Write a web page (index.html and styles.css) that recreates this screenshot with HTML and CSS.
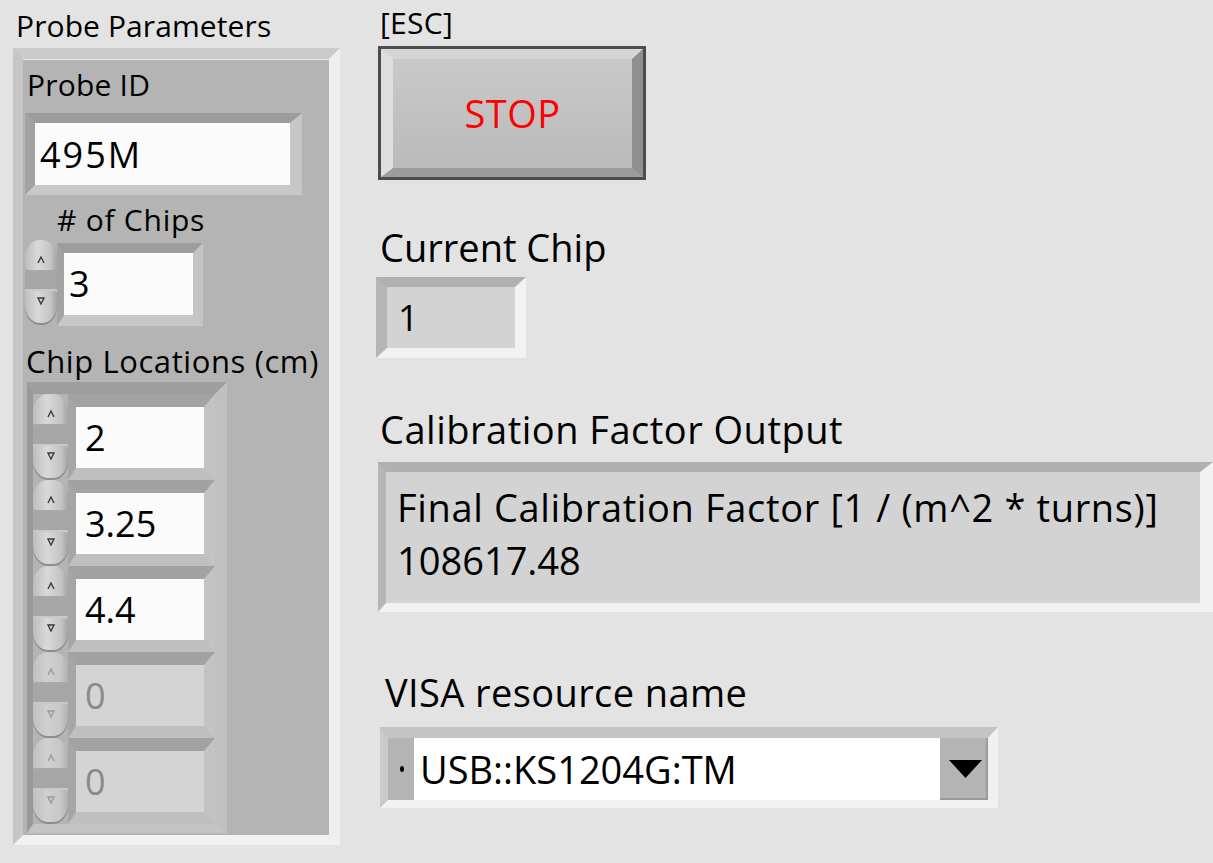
FILE: index.html
```html
<!DOCTYPE html>
<html>
<head>
<meta charset="utf-8">
<link rel="stylesheet" href="styles.css">
</head>
<body>
<div class="panel">
  <div class="left">
    <div class="lbl lbl-probe">Probe Parameters</div>
    <div class="cluster">
      <div class="clbl lbl-id">Probe ID</div>
      <div class="frame str-frame"><div class="field str-field">495M</div></div>
      <div class="clbl lbl-chips"># of Chips</div>
      <div class="numrow">
        <div class="incr incr-chips">
          <div class="up"><svg viewBox="0 0 12 12"><path d="M3 9 L6 3 L9 9"/></svg></div>
          <div class="mid"></div>
          <div class="dn"><svg viewBox="0 0 12 12"><path d="M3 3 L9 3 L6 9 Z"/></svg></div>
        </div>
        <div class="frame num-frame"><div class="field num-field">3</div></div>
      </div>
      <div class="clbl lbl-loc">Chip Locations (cm)</div>
      <div class="array">
        <div class="elem">
          <div class="incr"><div class="up"><svg viewBox="0 0 12 12"><path d="M3 9 L6 3 L9 9"/></svg></div><div class="mid"></div><div class="dn"><svg viewBox="0 0 12 12"><path d="M3 3 L9 3 L6 9 Z"/></svg></div></div>
          <div class="frame el-frame"><div class="field el-field">2</div></div>
        </div>
        <div class="elem">
          <div class="incr"><div class="up"><svg viewBox="0 0 12 12"><path d="M3 9 L6 3 L9 9"/></svg></div><div class="mid"></div><div class="dn"><svg viewBox="0 0 12 12"><path d="M3 3 L9 3 L6 9 Z"/></svg></div></div>
          <div class="frame el-frame"><div class="field el-field">3.25</div></div>
        </div>
        <div class="elem">
          <div class="incr"><div class="up"><svg viewBox="0 0 12 12"><path d="M3 9 L6 3 L9 9"/></svg></div><div class="mid"></div><div class="dn"><svg viewBox="0 0 12 12"><path d="M3 3 L9 3 L6 9 Z"/></svg></div></div>
          <div class="frame el-frame"><div class="field el-field">4.4</div></div>
        </div>
        <div class="elem disabled">
          <div class="incr"><div class="up"><svg viewBox="0 0 12 12"><path d="M3 9 L6 3 L9 9"/></svg></div><div class="mid"></div><div class="dn"><svg viewBox="0 0 12 12"><path d="M3 3 L9 3 L6 9 Z"/></svg></div></div>
          <div class="frame el-frame"><div class="field el-field">0</div></div>
        </div>
        <div class="elem disabled">
          <div class="incr"><div class="up"><svg viewBox="0 0 12 12"><path d="M3 9 L6 3 L9 9"/></svg></div><div class="mid"></div><div class="dn"><svg viewBox="0 0 12 12"><path d="M3 3 L9 3 L6 9 Z"/></svg></div></div>
          <div class="frame el-frame"><div class="field el-field">0</div></div>
        </div>
      </div>
    </div>
  </div>

  <div class="right">
    <div class="lbl lbl-esc">[ESC]</div>
    <div class="stop-btn"><div class="stop-face">STOP</div></div>
    <div class="rlbl lbl-cur">Current Chip</div>
    <div class="frame ind-frame cur-frame"><div class="ind cur-ind">1</div></div>
    <div class="rlbl lbl-cal">Calibration Factor Output</div>
    <div class="frame ind-frame cal-frame">
      <div class="ind cal-ind">
        <div class="cal-line cal-title">Final Calibration Factor [1 / (m^2 * turns)]</div>
        <div class="cal-line">108617.48</div>
      </div>
    </div>
    <div class="rlbl lbl-visa">VISA resource name</div>
    <div class="frame combo-frame">
      <div class="combo">
        <div class="combo-left"><span class="dot"></span></div>
        <div class="combo-text">USB::KS1204G:TM</div>
        <div class="combo-btn"><svg viewBox="0 0 33 18"><path d="M0 0 H33 L16.5 18 Z"/></svg></div>
      </div>
    </div>
  </div>
</div>
</body>
</html>
```

FILE: styles.css
```css
html, body {
  margin: 0;
  padding: 0;
  background: #e3e3e3;
  font-family: "Open Sans", "Noto Sans", sans-serif;
  color: #000;
}
.panel {
  display: flex;
  align-items: flex-start;
  width: 1213px;
  height: 863px;
  overflow: hidden;
}
.left {
  margin-left: 13px;
  width: 327px;
  padding-top: 9px;
}
.lbl {
  font-size: 30px;
  line-height: 34px;
  white-space: nowrap;
}
.lbl-probe {
  padding-left: 3px;
  margin-bottom: 5px;
  letter-spacing: 0.1px;
}
.cluster {
  border-style: solid;
  border-width: 11px 11px 10px 10px;
  border-color: #cbcbcb #efefef #f1f1f1 #c6c6c6;
  background: #b4b4b4;
  padding-bottom: 2px;
  box-shadow: inset 0 1px 0 #e6e6e6;
}
.clbl {
  font-size: 30px;
  line-height: 34px;
  white-space: nowrap;
}
.lbl-id { margin-top: 9px; padding-left: 4px; letter-spacing: 0.2px; }
.lbl-chips { margin-top: 8px; padding-left: 34px; letter-spacing: 0.75px; }
.lbl-loc { margin-top: 18px; padding-left: 3px; font-size: 31px; letter-spacing: 0.6px; }

.frame {
  border-style: solid;
  box-sizing: content-box;
}
.field {
  background: #fbfbfb;
  white-space: nowrap;
}
.str-frame {
  margin: 11px 0 0 2px;
  width: 255px;
  border-width: 10px 12px 10px 10px;
  border-color: #9c9c9c #c6c6c6 #c9c9c9 #a2a2a2;
}
.str-field {
  height: 62px;
  box-sizing: border-box;
  padding: 4px 0 0 5px;
  font-size: 36px;
  line-height: 56px;
  letter-spacing: 2px;
}
.numrow {
  display: flex;
  margin: 3px 0 0 2px;
}
.incr {
  width: 35px;
  display: flex;
  flex-direction: column;
}
.incr-chips {
  width: 32px;
  height: 85px;
}
.incr .up, .incr .dn {
  display: flex;
  justify-content: center;
  background: linear-gradient(to right, #bdbdbd, #d9d9d9 40%, #c4c4c4 80%, #a4a4a4);
}
.incr .up {
  height: 32px;
  border-radius: 15px 15px 2px 2px / 18px 18px 2px 2px;
  align-items: flex-end;
  box-shadow: inset 0 -2px 0 #a8a8a8;
}
.incr .mid {
  flex: 1;
  background: #a6a6a6;
}
.incr .dn {
  height: 36px;
  border-radius: 2px 2px 15px 15px / 2px 2px 18px 18px;
  align-items: flex-start;
  box-shadow: inset 0 -2px 0 #8c8c8c, inset 0 2px 0 #c9c9c9;
}
.incr svg {
  width: 12px;
  height: 12px;
  margin: 6px 0;
}
.incr svg path {
  fill: none;
  stroke: #3a3a3a;
  stroke-width: 1.4;
}
.num-frame {
  margin-top: 3px;
  width: 129px;
  border-width: 10px 10px 11px 7px;
  border-color: #9d9d9d #c4c4c4 #c7c7c7 #a3a3a3;
}
.num-field {
  height: 62px;
  font-size: 36px;
  line-height: 62px;
  padding-left: 5px;
  box-sizing: border-box;
}
.array {
  margin: 4px 0 0 4px;
  width: 182px;
  border-style: solid;
  border-width: 12px 12px 9px 6px;
  border-color: #9e9e9e #c0c0c0 #c4c4c4 #989898;
}
.elem {
  display: flex;
  height: 86px;
}
.elem .incr .up { height: 32px; }
.elem .incr .dn { height: 36px; }
.el-frame {
  width: 128px;
  border-width: 13px 11px 12px 8px;
  border-color: #a2a2a2 #c3c3c3 #bfbfbf #a6a6a6;
}
.el-field {
  height: 61px;
  font-size: 36px;
  line-height: 61px;
  padding-left: 9px;
  box-sizing: border-box;
}
.disabled .el-field {
  background: #d4d4d4;
  color: #8a8a8a;
}
.disabled .incr .up, .disabled .incr .dn {
  background: linear-gradient(to right, #c0c0c0, #d0d0d0 40%, #c6c6c6 80%, #b0b0b0);
}
.disabled .incr svg path { stroke: #9a9a9a; }

.right {
  margin-left: 38px;
  width: 835px;
  padding-top: 5px;
}
.lbl-esc {
  font-size: 30px;
  line-height: 36px;
  padding-left: 2px;
  letter-spacing: 0.3px;
}
.stop-btn {
  margin-top: 5px;
  width: 268px;
  height: 134px;
  box-sizing: border-box;
  border: 3px solid #4d4d4d;
}
.stop-face {
  height: 100%;
  box-sizing: border-box;
  border-style: solid;
  border-width: 10px 11px 9px 12px;
  border-color: #d6d6d6 #8f8f8f #9c9c9c #dedede;
  background: linear-gradient(#c9c9c9, #bababa);
  color: #ff0000;
  font-size: 38px;
  letter-spacing: 0.5px;
  display: flex;
  align-items: center;
  justify-content: center;
  padding-bottom: 2px;
}
.rlbl {
  font-size: 38px;
  line-height: 46px;
  padding-left: 2px;
  white-space: nowrap;
}
.lbl-cur { margin-top: 44px; }
.lbl-cal { margin-top: 48px; letter-spacing: 0.5px; }
.lbl-visa { margin-top: 57px; padding-left: 7px; letter-spacing: 0.4px; }
.ind-frame {
  border-color: #b0b0b0 #f2f2f2 #f2f2f2 #b6b6b6;
}
.ind {
  background: #d3d3d3;
  white-space: nowrap;
}
.cur-frame {
  margin: 7px 0 0 -2px;
  width: 128px;
  border-width: 10px 11px 10px 11px;
}
.cur-ind {
  height: 61px;
  font-size: 36px;
  line-height: 61px;
  padding-left: 11px;
  box-sizing: border-box;
}
.cal-frame {
  margin-top: 10px;
  width: 814px;
  border-width: 10px 13px 9px 8px;
}
.cal-ind {
  height: 131px;
  box-sizing: border-box;
  padding: 9px 0 0 11px;
  font-size: 38px;
  line-height: 53px;
}
.cal-title { letter-spacing: 0.65px; }
.combo-frame {
  margin: 12px 0 0 2px;
  width: 600px;
  border-width: 11px 10px 8px 8px;
  border-color: #c4c4c4 #f0f0f0 #f2f2f2 #cacaca;
}
.combo {
  display: flex;
  height: 62px;
  background: #fff;
}
.combo-left {
  width: 26px;
  background: #b4b4b4;
  display: flex;
  align-items: center;
  justify-content: center;
}
.dot {
  width: 4px;
  height: 6px;
  border-radius: 50%;
  background: #000;
  margin-left: 1px;
}
.combo-text {
  flex: 1;
  font-size: 38px;
  line-height: 62px;
  padding-left: 6px;
  white-space: nowrap;
}
.combo-btn {
  width: 48px;
  background: #b4b4b4;
  display: flex;
  align-items: center;
  justify-content: center;
  box-shadow: inset -2px 0 0 #9a9a9a, inset 0 -2px 0 #999;
}
.combo-btn svg {
  width: 33px;
  height: 18px;
  margin-left: 2px;
}
.combo-btn svg path { fill: #000; }
```
